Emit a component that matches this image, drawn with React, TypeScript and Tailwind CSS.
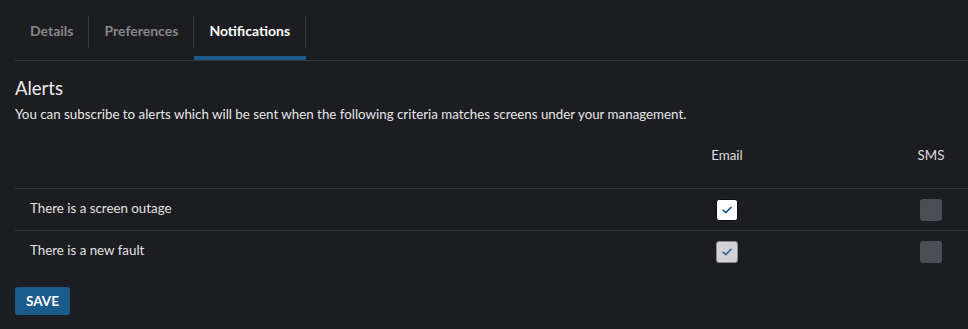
import React from "react";

const Check = ({ color }: { color: string }) => (
    <svg width="10" height="8" viewBox="0 0 10 8" fill="none">
        <path d="M1 4.2 L3.8 6.6 L9 1.4" stroke={color} strokeWidth="1.6" strokeLinecap="round" strokeLinejoin="round" />
    </svg>
);

const rows = [
    { label: "There is a screen outage", disabled: false },
    { label: "There is a new fault", disabled: true },
];

const App = () => {
    return (
        <div className="w-[968px] h-[329px] bg-[#1c1d21] font-['Lato',sans-serif] text-[#e4e4e4] overflow-hidden">
            {/* tabs */}
            <div className="ml-[15px] pt-[16px] flex border-b border-[#38393d]">
                {["Details", "Preferences", "Notifications"].map((tab, i) => {
                    const active = i === 2;
                    return (
                        <div key={tab} className="flex flex-col">
                            <div className={`h-[32px] flex items-center px-[15px] pb-[4px] border-r border-[#38393d] text-[14px] font-bold ${active ? "text-white" : "text-[#85868a]"}`}>
                                {tab}
                            </div>
                            <div className="h-[8px]" />
                            <div className={`h-[4px] ${active ? "bg-[#1b5a8c]" : ""}`} />
                        </div>
                    );
                })}
            </div>

            <div className="px-[15px]">
                <h2 className="mt-[16px] text-[18.5px] leading-[22px] font-normal text-[#ececec]">Alerts</h2>
                <p className="mt-[7px] text-[13.33px] leading-[16px] text-[#e6e6e6]">
                    You can subscribe to alerts which will be sent when the following criteria matches screens under your management.
                </p>

                <div className="mt-[24px] w-[953px] text-[13.33px]">
                    <div className="grid grid-cols-[1fr_120px_107px_74px] h-[43px] border-b border-[#38393d]">
                        <div />
                        <div className="text-center text-[#dcdcdc]">Email</div>
                        <div />
                        <div className="text-center text-[#dcdcdc]">SMS</div>
                    </div>
                    {rows.map((row, i) => (
                        <div key={row.label} className={`grid grid-cols-[1fr_120px_107px_74px] items-center h-[42px] ${i === 0 ? "border-b border-[#38393d]" : ""}`}>
                            <div className="pl-[15px] pb-[2px] text-[#e2e2e2]">{row.label}</div>
                            <div className="flex justify-center">
                                <div className={`w-[22px] h-[22px] rounded-[3px] border flex items-center justify-center ${row.disabled ? "bg-[#d3d3d5] border-[#8b8c90]" : "bg-white border-[#0d0d0f]"}`}>
                                    <Check color={row.disabled ? "#36688f" : "#1f5e92"} />
                                </div>
                            </div>
                            <div />
                            <div className="flex justify-center">
                                <div className="w-[22px] h-[22px] rounded-[3px] bg-[#4a4d54]" />
                            </div>
                        </div>
                    ))}
                </div>

                <button className="mt-[14px] w-[55px] h-[28px] rounded-[3px] bg-[#1a5b8c] text-white text-[13.5px] font-bold">
                    SAVE
                </button>
            </div>
        </div>
    );
};

export default App;
